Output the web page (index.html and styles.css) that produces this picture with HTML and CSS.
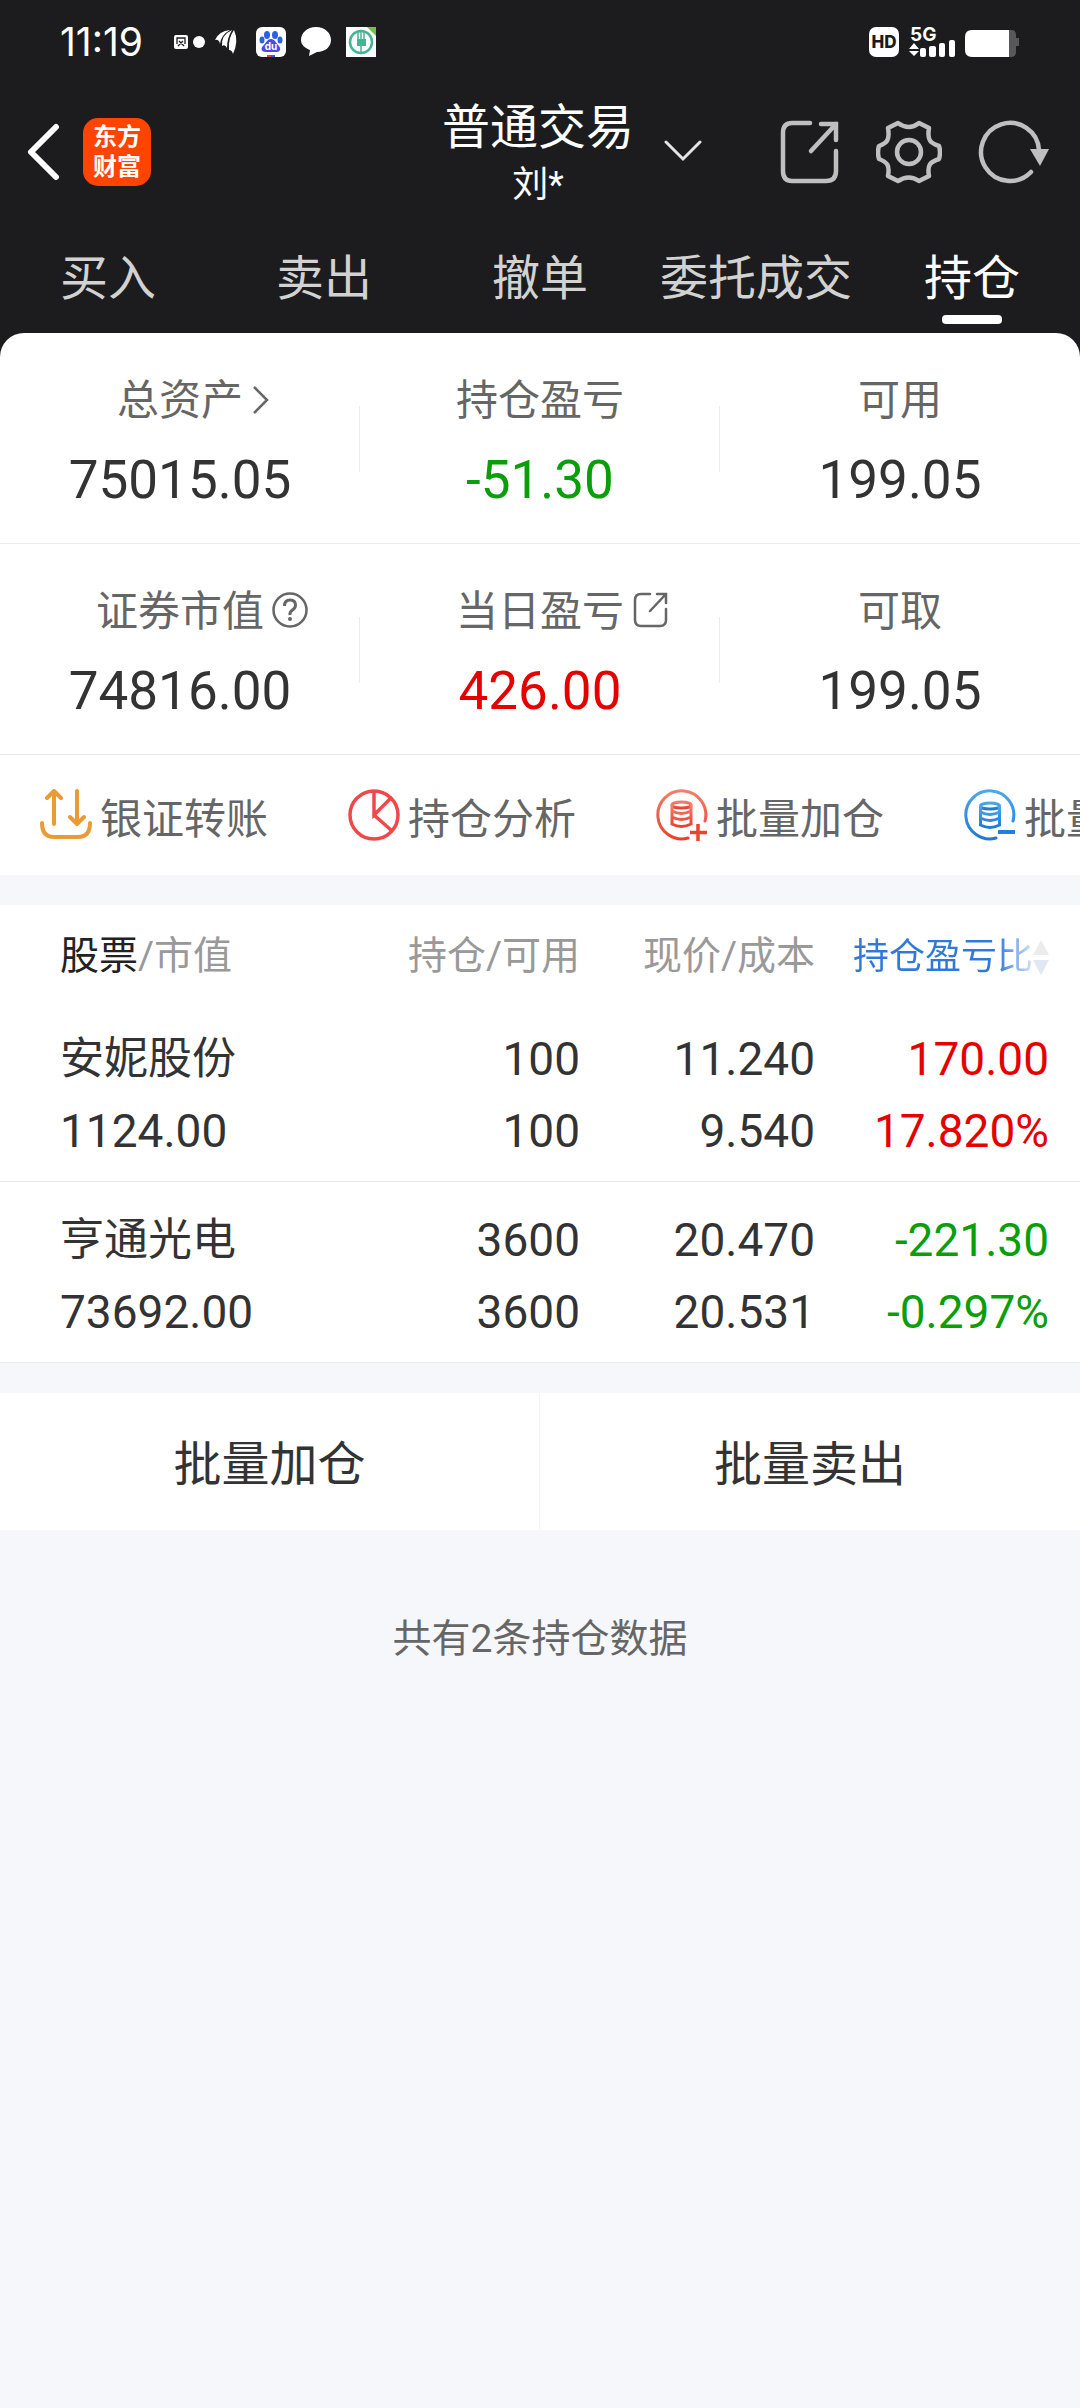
FILE: index.html
```html
<!DOCTYPE html>
<html lang="zh-CN">
<head>
<meta charset="utf-8">
<meta name="viewport" content="width=device-width">
<title>普通交易 - 持仓</title>
<link rel="stylesheet" href="styles.css">
</head>
<body>
<header class="top">
  <div class="status">
    <span class="clock">11:19</span>
    <svg class="notices" width="204" height="32" viewBox="0 0 204 32" aria-hidden="true">
      <rect x="0" y="9" width="14" height="14" rx="2" fill="#fff"/>
      <path d="M3 18v-6h8v6M5 15l5 5M9 15l-5 5" fill="none" stroke="#1c1c1e" stroke-width="1.300"/>
      <circle cx="25" cy="16" r="6" fill="#fff"/>
      <path d="M41 14Q45 5 56 4Q47 9 46 18Q45 13 41 14ZM48 20Q47 9 58 4Q53 12 53 22Q51 18 48 20ZM55 24Q54 12 60 4Q65 15 59 28Q58 24 55 24Z" fill="#fff"/>
      <rect x="82" y="1" width="30" height="30" rx="6" fill="#fff"/>
      <g fill="#2a5fe8"><ellipse cx="93" cy="9" rx="3" ry="4"/><ellipse cx="101" cy="9" rx="3" ry="4"/><ellipse cx="88" cy="14" rx="2.500" ry="3.500"/><ellipse cx="106" cy="14" rx="2.500" ry="3.500"/></g>
      <path d="M97 13c4 0 5 4 8 7 3 4 0 6-3 6H92c-4 0-6-3-3-6 3-3 4-7 8-7z" fill="#4a4ae6"/>
      <text x="97" y="24" text-anchor="middle" class="paw-text">du</text>
      <path d="M93 29h4v2h-4z" fill="#e03a3a"/><path d="M97 29h4v2h-4z" fill="#2a5fe8"/>
      <path d="M142 1c9 0 15 6 15 13s-6 12-14 12l-8 4 1-6c-5-2-9-5-9-10 0-7 6-13 15-13z" fill="#fff"/>
      <rect x="172" y="1" width="30" height="30" fill="#fff"/>
      <circle cx="187" cy="16" r="11" fill="none" stroke="#47b394" stroke-width="2.500"/>
      <path d="M187 6v20M184 5v11M190 5v11" stroke="#47b394" stroke-width="1.500"/>
      <path d="M183 13h9v7h-9z" fill="#47b394"/>
      <path d="M193 1h9v9z" fill="#6cc24a"/>
    </svg>
    <svg class="signals" width="151" height="44" viewBox="0 -6 151 44" aria-label="HD 5G">
      <rect x="0" y="1" width="30" height="30" rx="7" fill="#fff"/>
      <text x="15" y="22" text-anchor="middle" class="hd-text">HD</text>
      <text x="41" y="15" class="net-text">5G</text>
      <path d="M45 17l5 6H40zM45 30l5-5H40z" fill="#fff"/>
      <rect x="51" y="22" width="6" height="9" rx="2" fill="#fff"/><rect x="60" y="20" width="7" height="11" rx="2" fill="#fff"/><rect x="70" y="17" width="6" height="14" rx="2" fill="#fff"/><rect x="80" y="14" width="6" height="17" rx="2" fill="#fff"/>
      <path d="M140 4h2q5 0 5 5v3h3v8h-3v6q0 5-5 5h-2z" fill="#58585a"/>
      <path d="M103 4h37v27h-37q-7 0-7-7V11q0-7 7-7z" fill="#fff"/>
    </svg>
  </div>

  <div class="titlebar">
    <div class="side">
      <button class="icon-btn" aria-label="返回"><svg width="34" height="58" viewBox="0 0 34 58"><path d="M30 4L5 29l25 25" fill="none" stroke="#fff" stroke-width="6" stroke-linecap="round" stroke-linejoin="round"/></svg></button>
      <span class="logo">东方<br>财富</span>
    </div>
    <button class="account">
      <span class="account-text"><span class="account-type">普通交易</span><span class="account-name">刘*</span></span>
      <svg class="account-arrow" width="38" height="22" viewBox="0 0 38 22"><path d="M2 2l17 17L36 2" fill="none" stroke="#e4e4e4" stroke-width="3" stroke-linecap="round"/></svg>
    </button>
    <div class="side tools">
      <button class="icon-btn" aria-label="分享"><svg width="60" height="64" viewBox="0 0 60 64"><g fill="none" stroke="#bfbfbf" stroke-width="4.500" stroke-linecap="round"><path d="M30 3H12Q3 3 3 13v38q0 10 9 10h34q10 0 10-10V31"/><path d="M41 4h15v16M56 4L31 31"/></g></svg></button>
      <button class="icon-btn" aria-label="设置"><svg width="66" height="64" viewBox="0 0 66 64"><g fill="none" stroke="#bfbfbf" stroke-width="4.500" stroke-linejoin="round"><path d="M22 3Q33 11 43 3L53 8C51 20 54 23 63 26Q65 32 63 39C54 42 51 45 53 56L43 61Q33 54 22 61L12 56C14 45 11 42 3 39Q1 32 3 26C11 23 14 20 12 8Z"/><circle cx="33" cy="32" r="12"/></g></svg></button>
      <button class="icon-btn" aria-label="刷新"><svg width="72" height="64" viewBox="0 0 72 64"><path d="M61 30A29 29 0 1 0 53 52" fill="none" stroke="#bfbfbf" stroke-width="4.500" stroke-linecap="round"/><path d="M52 29h19l-9 17z" fill="#bfbfbf"/></svg></button>
    </div>
  </div>

  <nav class="tabs">
    <a href="#buy">买入</a><a href="#sell">卖出</a><a href="#cancel">撤单</a><a href="#orders">委托成交</a><a href="#positions" class="active" aria-current="page">持仓</a>
  </nav>
</header>

<main>
  <section class="summary-wrap">
    <div class="summary">
      <div class="metric">
        <div class="label"><span class="label-text">总资产</span><svg width="26" height="36" viewBox="0 0 26 36"><path d="M11 4l13 13-13 13" fill="none" stroke="#666" stroke-width="2.500"/></svg></div>
        <div class="value">75015.05</div>
      </div>
      <div class="metric"><div class="label"><span class="label-text">持仓盈亏</span></div><div class="value down">-51.30</div></div>
      <div class="metric"><div class="label"><span class="label-text">可用</span></div><div class="value">199.05</div></div>
      <div class="metric">
        <div class="label"><span class="label-text">证券市值</span><svg width="46" height="40" viewBox="0 0 46 40"><g fill="none" stroke="#666" stroke-width="2.500"><circle cx="26" cy="18" r="16.500"/><path d="M20.500 14q0-6 5.500-6t5.500 5q0 3-3 5t-2.500 5" stroke-width="3"/></g><circle cx="26" cy="27" r="2" fill="#666"/></svg></div>
        <div class="value">74816.00</div>
      </div>
      <div class="metric">
        <div class="label"><span class="label-text">当日盈亏</span><svg width="46" height="40" viewBox="0 0 46 40"><g fill="none" stroke="#666" stroke-width="2.500" stroke-linecap="round"><path d="M26 2h-9q-6 0-6 6v20q0 6 6 6h19q6 0 6-6V17"/><path d="M33 2h9v9M42 2L26 19"/></g></svg></div>
        <div class="value up">426.00</div>
      </div>
      <div class="metric"><div class="label"><span class="label-text">可取</span></div><div class="value">199.05</div></div>
    </div>
  </section>

  <nav class="actions">
    <a href="#transfer"><svg width="52" height="52" viewBox="0 0 52 52"><g fill="none" stroke="#e99c36" stroke-width="4" stroke-linecap="round" stroke-linejoin="round"><path d="M2 34q0 14 12 14h24q12 0 12-14M14 35V3M7 9l7-7 7 7M37 2v32M30 28l7 7 7-7"/></g></svg>银证转账</a>
    <a href="#analysis"><svg width="52" height="52" viewBox="0 0 52 52"><g fill="none" stroke="#f04848" stroke-width="3.500"><circle cx="26" cy="26" r="24"/><path d="M26 2v24l17-17M26 26l17 15"/></g></svg>持仓分析</a>
    <a href="#batch-add"><svg width="52" height="52" viewBox="0 0 52 52"><defs><linearGradient id="warm" x1="0" y1="0" x2="0" y2="1"><stop offset="0" stop-color="#f0806a"/><stop offset="1" stop-color="#ea4030"/></linearGradient></defs><g fill="none" stroke="url(#warm)" stroke-width="3" stroke-linecap="round"><path d="M49 32A24 24 0 1 0 32 49"/><ellipse cx="25.500" cy="16" rx="9.500" ry="3"/><path d="M16 16v19q9.500 5 19 0V16M16 22q9.500 5 19 0M16 28q9.500 5 19 0"/></g><path d="M42 35v17M34 43.500h17" stroke="#ea4435" stroke-width="3.500"/></svg>批量加仓</a>
    <a href="#batch-sell"><svg width="52" height="52" viewBox="0 0 52 52"><defs><linearGradient id="cool" x1="0" y1="0" x2="0" y2="1"><stop offset="0" stop-color="#4aaae8"/><stop offset="1" stop-color="#2078d8"/></linearGradient></defs><g fill="none" stroke="url(#cool)" stroke-width="3" stroke-linecap="round"><path d="M49 32A24 24 0 1 0 32 49"/><ellipse cx="26" cy="17" rx="9.500" ry="3"/><path d="M16.500 17v19q9.500 5 19 0V17M16.500 23q9.500 5 19 0M16.500 29q9.500 5 19 0"/></g><path d="M34 43h17" stroke="#2080dc" stroke-width="4"/></svg>批量卖出</a>
  </nav>

  <table class="holdings">
    <colgroup><col><col class="col-qty"><col class="col-price"><col class="col-profit"></colgroup>
    <thead>
      <tr>
        <th scope="col"><strong>股票</strong>/市值</th>
        <th scope="col">持仓/可用</th>
        <th scope="col">现价/成本</th>
        <th scope="col"><button class="sort"><span class="sort-text">持仓盈亏比</span><svg width="16" height="38" viewBox="0 0 16 38"><path d="M8 2l8 15H0z" fill="#ececec"/><path d="M0 22h16L8 37z" fill="#dfe8f3"/></svg></button></th>
      </tr>
    </thead>
    <tbody>
      <tr>
        <td><div class="name">安妮股份</div><div>1124.00</div></td>
        <td><div>100</div><div>100</div></td>
        <td><div>11.240</div><div>9.540</div></td>
        <td class="up"><div>170.00</div><div>17.820%</div></td>
      </tr>
      <tr>
        <td><div class="name">亨通光电</div><div>73692.00</div></td>
        <td><div>3600</div><div>3600</div></td>
        <td><div>20.470</div><div>20.531</div></td>
        <td class="down"><div>-221.30</div><div>-0.297%</div></td>
      </tr>
    </tbody>
  </table>

  <div class="batch"><button>批量加仓</button><button>批量卖出</button></div>
  <p class="count">共有2条持仓数据</p>
</main>
</body>
</html>
```
FILE: styles.css
```css
* { box-sizing: border-box; }

body {
  margin: 0;
  background: #f6f7fa;
  color: #333;
  font-family: Roboto, "Noto Sans CJK SC", sans-serif;
}

a { color: inherit; text-decoration: none; }

button {
  margin: 0;
  padding: 0;
  border: 0;
  background: none;
  color: inherit;
  font: inherit;
}

svg { display: block; flex: none; }

.up { color: #e60000; }
.down { color: #0a9f0a; }

/* Top area */
.top { background: #1c1c1e; color: #fff; }

.status {
  display: flex;
  align-items: center;
  height: 84px;
  padding: 0 60px;
}

.clock {
  width: 114px;
  font-family: Inter, sans-serif;
  font-size: 39px;
  line-height: 44px;
}

.signals { margin-left: auto; }
.paw-text { fill: #fff; font: 700 10px Inter, sans-serif; }
.hd-text { fill: #1c1c1e; font: 800 17px Inter, sans-serif; }
.net-text { fill: #fff; font: 700 19px Inter, sans-serif; }

.titlebar {
  display: grid;
  grid-template-columns: 1fr auto 1fr;
  align-items: center;
  height: 136px;
  padding: 0 30px 0 26px;
}

.side { display: flex; align-items: center; gap: 23px; }
.tools { justify-content: flex-end; gap: 36px; }

.logo {
  width: 68px;
  height: 68px;
  padding: 4px 0;
  border-radius: 15px;
  background: #ff4400;
  text-align: center;
  font-size: 24px;
  font-weight: 700;
  line-height: 30px;
}

.account { position: relative; }
.account-text { display: flex; flex-direction: column; align-items: center; padding-top: 6px; }
.account-type { font-size: 48px; line-height: 60px; }
.account-name { font-size: 36px; line-height: 54px; }
.account-arrow { position: absolute; left: 100%; top: 50%; margin-left: 30px; margin-top: -12px; }

.tabs {
  display: grid;
  grid-template-columns: repeat(5, 1fr);
  height: 113px;
  color: #d2d2d2;
  font-size: 48px;
  line-height: 72px;
  text-align: center;
}

.tabs a {
  display: flex;
  flex-direction: column;
  align-items: center;
  padding-top: 23px;
}

.tabs .active { color: #fff; }

.tabs .active::after {
  content: "";
  width: 60px;
  height: 9px;
  border-radius: 4px;
  background: #fff;
}

/* Account summary */
.summary-wrap { background: #1c1c1e; }

.summary {
  display: grid;
  grid-template-columns: repeat(3, 1fr);
  border-radius: 24px 24px 0 0;
  background: #fff;
}

.metric {
  height: 211px;
  padding-top: 38px;
  border-bottom: 1px solid #ebebeb;
  background: linear-gradient(#ebebeb, #ebebeb) right 0 top 73px / 1px 66px no-repeat;
}

.metric:nth-child(3n) { background: none; }

.label {
  display: grid;
  grid-template-columns: 1fr auto 1fr;
  align-items: center;
  height: 60px;
  color: #666;
  font-size: 42px;
  line-height: 60px;
}

.label-text { grid-column: 2; }

.value {
  padding-top: 14px;
  font-size: 53px;
  line-height: 70px;
  text-align: center;
}

/* Shortcuts */
.actions {
  display: flex;
  gap: 80px;
  height: 120px;
  padding-left: 40px;
  overflow: hidden;
  background: #fff;
  color: #666;
  font-size: 42px;
}

.actions a {
  display: flex;
  flex: none;
  align-items: center;
  gap: 8px;
  white-space: nowrap;
}

/* Holdings */
.holdings {
  width: 100%;
  margin-top: 30px;
  border-spacing: 0;
  table-layout: fixed;
  background: #fff;
  font-size: 46px;
  line-height: 72px;
}

.col-qty { width: 240px; }
.col-price { width: 235px; }
.col-profit { width: 265px; }

.holdings th {
  height: 96px;
  padding: 6px 0 0;
  color: #999;
  font-size: 39px;
  font-weight: 400;
  line-height: 60px;
  text-align: right;
  white-space: nowrap;
}

.holdings strong { color: #222; font-weight: 400; }

.holdings td {
  height: 181px;
  padding: 22px 0 14px;
  border-bottom: 1px solid #ebebeb;
  text-align: right;
}

.holdings th:first-child, .holdings td:first-child { padding-left: 60px; text-align: left; }
.holdings th:last-child, .holdings td:last-child { padding-right: 31px; }

.name { font-size: 44px; }

.sort { display: inline-flex; align-items: center; font-size: 36px; vertical-align: middle; }

.sort-text {
  background: linear-gradient(90deg, #3079d8 0 80%, #d5e3f6);
  background-clip: text;
  color: transparent;
}

/* Batch buttons */
.batch {
  display: grid;
  grid-template-columns: 1fr 1fr;
  margin-top: 30px;
  background: #fff;
}

.batch button { height: 137px; padding-bottom: 4px; font-size: 48px; }
.batch button:first-child { border-right: 1px solid #f4f4f5; }

.count {
  margin: 79px 0;
  color: #666;
  font-size: 39px;
  line-height: 60px;
  text-align: center;
}
```
